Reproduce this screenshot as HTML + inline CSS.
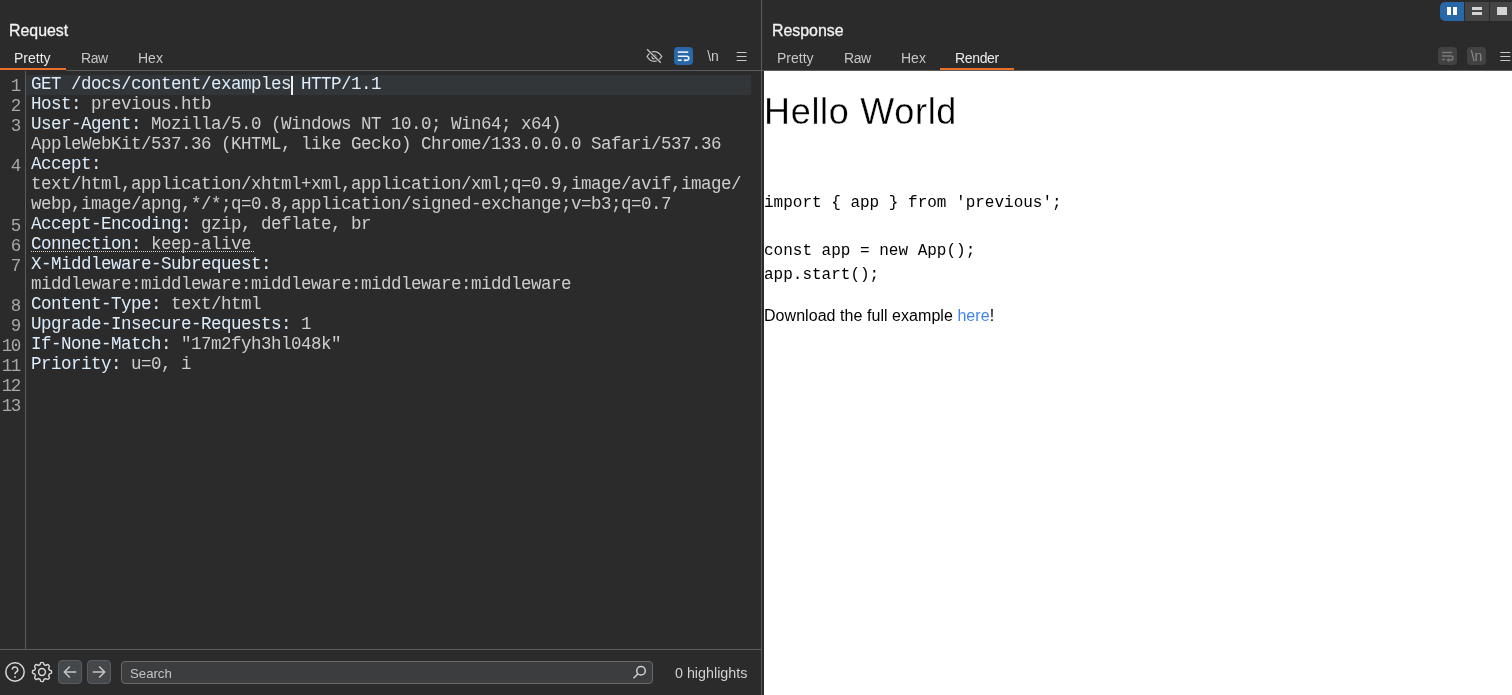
<!DOCTYPE html>
<html><head><meta charset="utf-8">
<style>
*{margin:0;padding:0;box-sizing:border-box}
html,body{width:1512px;height:695px;overflow:hidden;background:#2b2b2b;font-family:"Liberation Sans",sans-serif}
.abs{position:absolute}
.title{position:absolute;color:#f2f2f2;-webkit-text-stroke:0.3px #f2f2f2;font-size:15.9px;line-height:20px}
.tab{position:absolute;color:#c6c6c6;font-size:14px;line-height:16px}
.tab.sel{color:#ebebeb}
.uline{position:absolute;height:2px;background:#e8702a}
.hline{position:absolute;height:1px;background:#5c5c5c}
.vline{position:absolute;width:1px;background:#5c5c5c}
#code{position:absolute;left:31px;top:74px;font-family:"Liberation Mono",monospace;font-size:17.5px;letter-spacing:-0.5px;line-height:20px;white-space:normal;color:#cdcdcd}
#code div{height:20px;white-space:pre}
.k{color:#dcecfb}
#gut{position:absolute;left:0;top:76px;width:19.8px;font-family:"Liberation Mono",monospace;font-size:17.5px;letter-spacing:-1.5px;line-height:20px;white-space:normal;color:#a8a8a8;text-align:right}
#gut div{height:20px;white-space:pre}
#resp{position:absolute;left:764px;top:71px;width:748px;height:624px;background:#fff}
div,span,svg{will-change:transform}
</style></head><body>
<!-- Request panel -->
<div class="title" style="left:9px;top:21px">Request</div>
<div class="tab sel" style="left:14px;top:50px">Pretty</div>
<div class="tab" style="left:81px;top:50px;letter-spacing:-0.4px">Raw</div>
<div class="tab" style="left:138px;top:50px">Hex</div>
<div class="uline" style="left:0;top:68px;width:66px"></div>
<div class="hline" style="left:66px;top:70px;width:696px"></div>
<div class="vline" style="left:25px;top:71px;height:578px"></div>
<div class="abs" style="left:26px;top:75px;width:725px;height:20px;background:#323639"></div>
<div id="gut">
<div>1</div><div>2</div><div>3</div><div></div><div>4</div><div></div><div></div><div>5</div><div>6</div><div>7</div><div></div><div>8</div><div>9</div><div>10</div><div>11</div><div>12</div><div>13</div>
</div>
<div id="code">
<div><span class="k">GET /docs/content/examples</span><span class="k"> HTTP/1.1</span></div>
<div><span class="k">Host:</span> previous.htb</div>
<div><span class="k">User-Agent:</span> Mozilla/5.0 (Windows NT 10.0; Win64; x64)</div>
<div>AppleWebKit/537.36 (KHTML, like Gecko) Chrome/133.0.0.0 Safari/537.36</div>
<div><span class="k">Accept:</span></div>
<div>text/html,application/xhtml+xml,application/xml;q=0.9,image/avif,image/</div>
<div>webp,image/apng,*/*;q=0.8,application/signed-exchange;v=b3;q=0.7</div>
<div><span class="k">Accept-Encoding:</span> gzip, deflate, br</div>
<div><span class="k">Connection:</span> keep-alive</div>
<div><span class="k">X-Middleware-Subrequest:</span></div>
<div>middleware:middleware:middleware:middleware:middleware</div>
<div><span class="k">Content-Type:</span> text/html</div>
<div><span class="k">Upgrade-Insecure-Requests:</span> 1</div>
<div><span class="k">If-None-Match:</span> "17m2fyh3hl048k"</div>
<div><span class="k">Priority:</span> u=0, i</div>
<div></div>
<div></div>
</div>

<div class="abs" style="left:291px;top:76px;width:2px;height:19px;background:#f0f0f0"></div>
<div class="abs" style="left:31px;top:251px;width:223px;height:1px;background:repeating-linear-gradient(90deg,#d4d4d4 0 1px,transparent 1px 2px)"></div>
<!-- splitter -->
<div class="vline" style="left:761px;top:0;height:695px"></div>

<!-- Response panel -->
<div class="title" style="left:772px;top:21px">Response</div>
<div class="tab" style="left:777px;top:50px">Pretty</div>
<div class="tab" style="left:844px;top:50px;letter-spacing:-0.4px">Raw</div>
<div class="tab" style="left:901px;top:50px">Hex</div>
<div class="tab sel" style="left:955px;top:50px;letter-spacing:-0.35px">Render</div>
<div class="uline" style="left:940px;top:68px;width:74px"></div>
<div class="hline" style="left:762px;top:70px;width:750px"></div>
<div id="resp">
<div class="abs" style="left:0;top:19px;font-size:36px;letter-spacing:0.7px;line-height:44px;color:#000;-webkit-text-stroke:0.3px #fff;white-space:pre">Hello World</div>
<div class="abs" style="left:0;top:120px;font-family:'Liberation Mono',monospace;font-size:16px;line-height:24px;color:#000;white-space:pre">import { app } from 'previous';<br><br>const app = new App();<br>app.start();</div>
<div class="abs" style="left:0;top:235px;font-size:16px;letter-spacing:0.05px;line-height:20px;color:#000;white-space:pre">Download the full example <span style="color:#3f86e8">here</span>!</div>
</div>
<!-- top right layout buttons -->
<div class="abs" style="left:1440px;top:2px;width:24px;height:19px;background:#2868a8;border-radius:5px 0 0 5px"></div>
<div class="abs" style="left:1447px;top:7px;width:4px;height:8px;background:#fff"></div>
<div class="abs" style="left:1453px;top:7px;width:4px;height:8px;background:#fff"></div>
<div class="abs" style="left:1465px;top:2px;width:24px;height:19px;background:#454545"></div>
<div class="abs" style="left:1472px;top:7px;width:10px;height:3px;background:#d4d4d4"></div>
<div class="abs" style="left:1472px;top:12px;width:10px;height:3px;background:#d4d4d4"></div>
<div class="abs" style="left:1490px;top:2px;width:22px;height:19px;background:#454545"></div>
<div class="abs" style="left:1497px;top:7px;width:10px;height:8px;background:#d4d4d4"></div>
<!-- response toolbar -->
<div class="abs" style="left:1438px;top:47px;width:19px;height:18px;background:#424242;border-radius:4px"></div>
<svg class="abs" style="left:1438px;top:47px" width="19" height="18" viewBox="0 0 19 18"><g stroke="#7a7a7a" stroke-width="1.4" fill="none"><path d="M4 5.5H14"/><path d="M4 9H13a2 2 0 0 1 0 4H10"/><path d="M4 12.5H7"/><path d="M11 11.5L9.5 13L11 14.5"/></g></svg>
<div class="abs" style="left:1467px;top:47px;width:19px;height:18px;background:#424242;border-radius:4px"></div>
<div class="abs" style="left:1467px;top:47px;width:19px;height:18px;color:#8a8a8a;font-size:14px;line-height:18px;text-align:center">\n</div>
<svg class="abs" style="left:1500px;top:51px" width="12" height="11" viewBox="0 0 12 11"><g stroke="#c8c8c8" stroke-width="1.2"><path d="M0.3 1.5H10.3M0.3 5.5H10.3M0.3 9.5H10.3"/></g></svg>


<!-- request toolbar -->
<svg class="abs" style="left:645px;top:47px" width="18" height="18" viewBox="0 0 18 18"><g fill="none" stroke-width="1.3"><path d="M2 9.5C4 6.4 6.2 4.6 9.3 4.6S14.8 6.4 16.8 9.5C14.8 12.6 12.4 14.4 9.3 14.4S4 12.6 2 9.5Z" stroke="#c4c4c4"/><circle cx="9" cy="9.7" r="2" stroke="#c4c4c4" stroke-width="1.1"/><path d="M2.1 2.2L15.8 15.7" stroke="#2b2b2b" stroke-width="2.8"/><path d="M2.1 2.2L15.8 15.7" stroke="#c4c4c4"/></g></svg>
<div class="abs" style="left:674px;top:47px;width:19px;height:18px;background:#2868a8;border-radius:4px"></div>
<svg class="abs" style="left:674px;top:47px" width="19" height="18" viewBox="0 0 19 18"><g stroke="#eef3f8" stroke-width="1.6" fill="none"><path d="M3.8 5.1H14.3"/><path d="M3.8 9.3H12.9a1.95 1.95 0 0 1 0 3.9H11"/><path d="M3.8 13.2H7.7"/></g><path d="M11.4 11.5L9.5 13.2L11.4 14.9Z" fill="#eef3f8"/></svg>
<div class="abs" style="left:704px;top:47px;width:18px;height:18px;color:#c8c8c8;font-size:14px;line-height:18px;text-align:center">\n</div>
<svg class="abs" style="left:736px;top:51px" width="12" height="11" viewBox="0 0 12 11"><g stroke="#c8c8c8" stroke-width="1.2"><path d="M0.7 1.5H10.5M0.7 5.5H10.5M0.7 9.5H10.5"/></g></svg>
<!-- bottom bar -->
<div class="hline" style="left:0;top:649px;width:761px"></div>
<svg class="abs" style="left:4px;top:661px" width="22" height="22" viewBox="0 0 22 22"><circle cx="11" cy="11" r="9.2" stroke="#d8d8d8" stroke-width="1.5" fill="none"/><path d="M8.3 8.6a2.7 2.7 0 1 1 3.8 2.5c-.7.35-1.1.9-1.1 1.6v.5" stroke="#d8d8d8" stroke-width="1.5" fill="none"/><rect x="10.1" y="15.2" width="1.8" height="1.5" fill="#d8d8d8"/></svg>
<svg class="abs" style="left:31px;top:661px" width="22" height="22" viewBox="0 0 22 22"><path d="M8.93 3.79 L9.25 3.09 A1.75 1.75 0 0 1 12.75 3.09 L13.07 3.79 A7.50 7.50 0 0 1 14.64 4.44 L15.35 4.17 A1.75 1.75 0 0 1 17.83 6.65 L17.56 7.36 A7.50 7.50 0 0 1 18.21 8.93 L18.91 9.25 A1.75 1.75 0 0 1 18.91 12.75 L18.21 13.07 A7.50 7.50 0 0 1 17.56 14.64 L17.83 15.35 A1.75 1.75 0 0 1 15.35 17.83 L14.64 17.56 A7.50 7.50 0 0 1 13.07 18.21 L12.75 18.91 A1.75 1.75 0 0 1 9.25 18.91 L8.93 18.21 A7.50 7.50 0 0 1 7.36 17.56 L6.65 17.83 A1.75 1.75 0 0 1 4.17 15.35 L4.44 14.64 A7.50 7.50 0 0 1 3.79 13.07 L3.09 12.75 A1.75 1.75 0 0 1 3.09 9.25 L3.79 8.93 A7.50 7.50 0 0 1 4.44 7.36 L4.17 6.65 A1.75 1.75 0 0 1 6.65 4.17 L7.36 4.44 A7.50 7.50 0 0 1 8.93 3.79 Z" stroke="#d8d8d8" stroke-width="1.4" stroke-linejoin="round" fill="none"/><circle cx="11" cy="11" r="3.4" stroke="#d8d8d8" stroke-width="1.5" fill="none"/></svg>
<div class="abs" style="left:58px;top:660px;width:24px;height:24px;background:#45484b;border:1px solid #5a5d60;border-radius:4px"></div>
<svg class="abs" style="left:58px;top:660px" width="24" height="24" viewBox="0 0 24 24"><g stroke="#c6c6c6" stroke-width="1.5" fill="none"><path d="M18.2 12H6.4"/><path d="M11.8 6.5L6.3 12L11.8 17.5"/></g></svg>
<div class="abs" style="left:87px;top:660px;width:24px;height:24px;background:#45484b;border:1px solid #5a5d60;border-radius:4px"></div>
<svg class="abs" style="left:87px;top:660px" width="24" height="24" viewBox="0 0 24 24"><g stroke="#c6c6c6" stroke-width="1.5" fill="none"><path d="M5.8 12H17.6"/><path d="M12.2 6.5L17.7 12L12.2 17.5"/></g></svg>
<div class="abs" style="left:121px;top:661px;width:532px;height:23px;background:#3c3d3f;border:1px solid #6a6a6a;border-radius:4px"></div>
<div class="abs" style="left:130px;top:665px;font-size:13.2px;line-height:17px;color:#c4c4c4">Search</div>
<svg class="abs" style="left:632px;top:665px" width="15" height="15" viewBox="0 0 15 15"><g stroke="#d0d0d0" stroke-width="1.5" fill="none"><circle cx="9" cy="5.8" r="4.3"/><path d="M5.8 9L1.5 13.3"/></g></svg>
<div class="abs" style="left:675px;top:665px;font-size:14.3px;line-height:17px;color:#d0d0d0">0 highlights</div>
</body></html>
